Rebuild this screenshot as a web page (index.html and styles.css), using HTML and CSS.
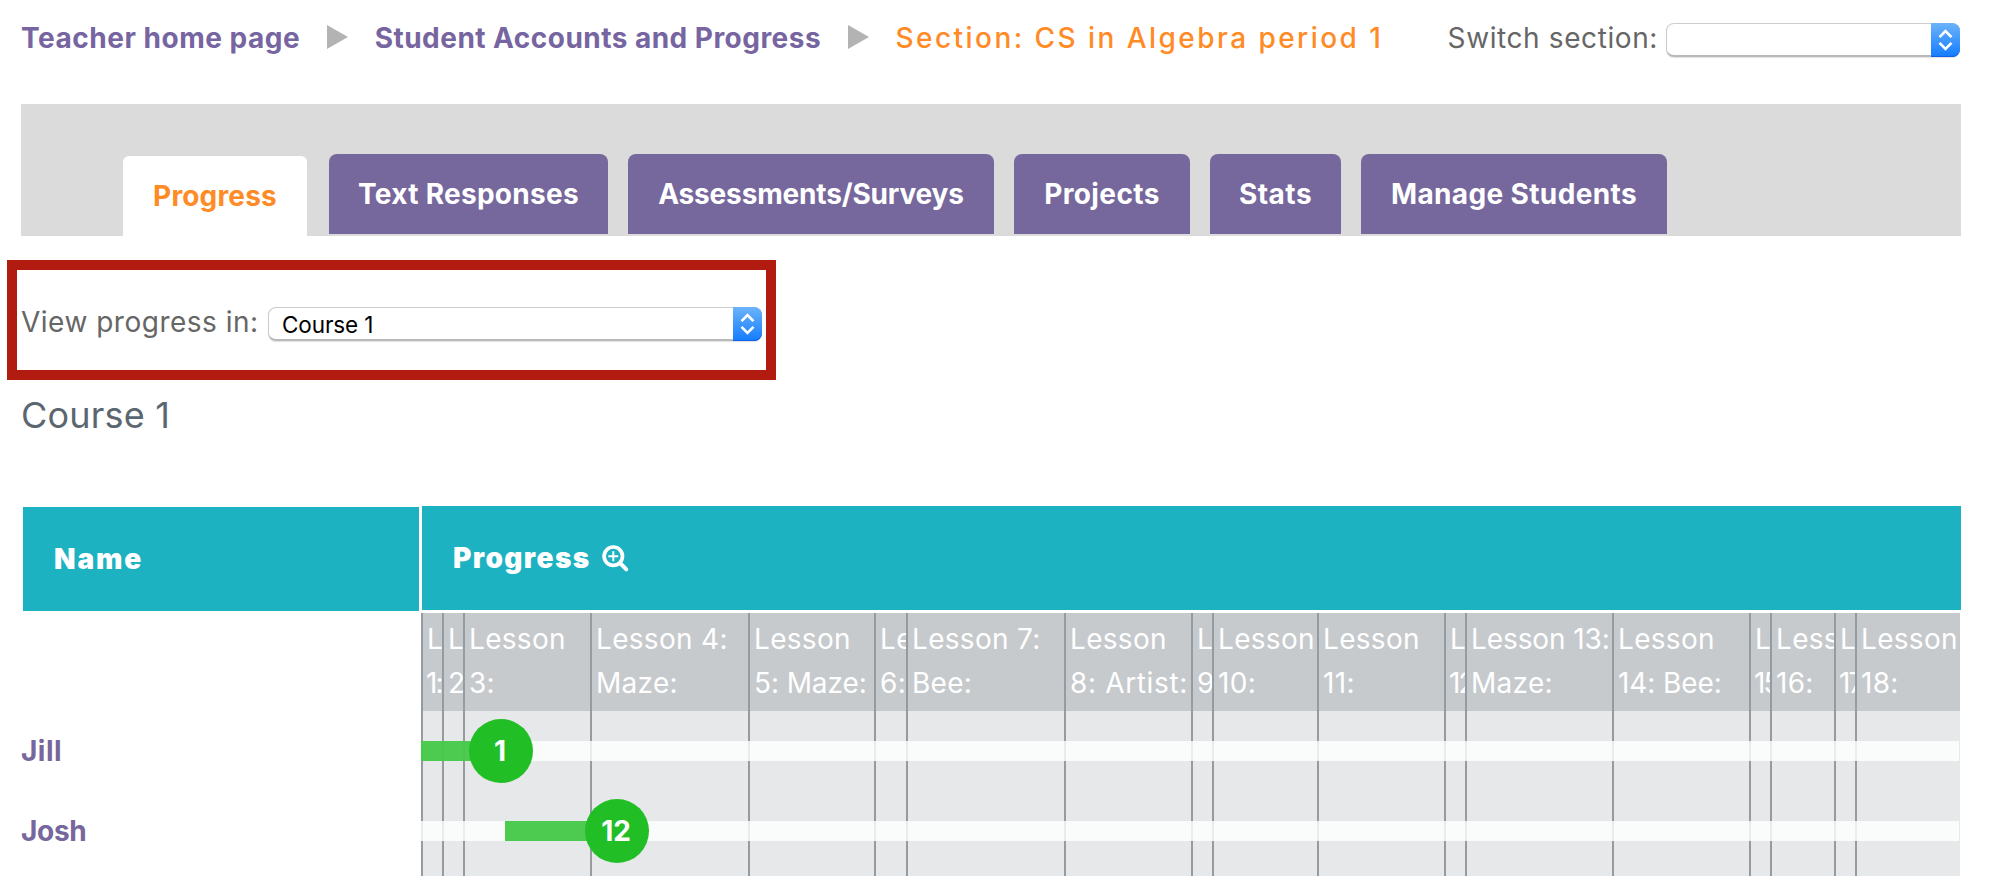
FILE: index.html
```html
<!DOCTYPE html>
<html lang="en">
<head>
<meta charset="utf-8">
<title>Section progress</title>
<link rel="stylesheet" href="styles.css">
</head>
<body>
<header class="topbar">
  <a class="crumb crumb-home">Teacher home page</a>
  <svg class="crumb-arrow" width="21" height="24" viewBox="0 0 21 24"><path d="M0 0L21 12L0 24Z" fill="#b3b3b3"/></svg>
  <a class="crumb crumb-accounts">Student Accounts and Progress</a>
  <svg class="crumb-arrow" width="21" height="24" viewBox="0 0 21 24"><path d="M0 0L21 12L0 24Z" fill="#b3b3b3"/></svg>
  <span class="crumb-current">Section: CS in Algebra period 1</span>
  <div class="switcher">
    <span class="switcher-label">Switch section:</span>
    <div class="select select-section">
      <span class="select-value"></span>
      <span class="select-button"><svg width="29" height="34" viewBox="0 0 29 34" fill="none" stroke="#fff" stroke-width="2.6"><path d="M8.5 14.2L14.5 8L20.5 14.2M8.5 19.8L14.5 26L20.5 19.8"/></svg></span>
    </div>
  </div>
</header>

<nav class="tabs">
  <a class="tab tab-active">Progress</a>
  <a class="tab tab-responses">Text Responses</a>
  <a class="tab tab-assessments">Assessments/Surveys</a>
  <a class="tab tab-projects">Projects</a>
  <a class="tab tab-stats">Stats</a>
  <a class="tab tab-manage">Manage Students</a>
</nav>

<main>
  <section class="course-picker">
    <span class="picker-label">View progress in:</span>
    <div class="select select-course">
      <span class="select-value">Course 1</span>
      <span class="select-button"><svg width="29" height="34" viewBox="0 0 29 34" fill="none" stroke="#fff" stroke-width="2.6"><path d="M8.5 14.2L14.5 8L20.5 14.2M8.5 19.8L14.5 26L20.5 19.8"/></svg></span>
    </div>
  </section>

  <h1 class="course-title">Course 1</h1>

  <div class="report">
    <div class="names">
      <div class="head head-name">Name</div>
      <div class="name-list">
        <a class="student jill">Jill</a>
        <a class="student josh">Josh</a>
      </div>
    </div>
    <div class="progress">
      <div class="head head-progress">
        <span class="head-text">Progress</span>
        <svg class="zoom-icon" width="28" height="28" viewBox="0 0 28 28" fill="none" stroke="#fff"><circle cx="11.3" cy="11.2" r="9.2" stroke-width="3.7"/><path d="M18 18L24.3 24.3" stroke-width="4" stroke-linecap="round"/><path d="M11.3 6.2V16.2M6.3 11.2H16.3" stroke-width="2"/></svg>
      </div>
      <div class="chart">
        <div class="lessons">
          <div class="lesson"><div class="lesson-name">Lesson<br><span class="digits">1:</span></div></div>
          <div class="lesson"><div class="lesson-name">Lesson<br>2:</div></div>
          <div class="lesson"><div class="lesson-name">Lesson<br>3:</div></div>
          <div class="lesson"><div class="lesson-name">Lesson 4:<br>Maze:</div></div>
          <div class="lesson"><div class="lesson-name">Lesson<br><span class="snug">5: Maze:</span></div></div>
          <div class="lesson"><div class="lesson-name">Lesson<br>6:</div></div>
          <div class="lesson"><div class="lesson-name">Lesson 7:<br>Bee:</div></div>
          <div class="lesson"><div class="lesson-name">Lesson<br><span class="loose">8: Artist:</span></div></div>
          <div class="lesson"><div class="lesson-name">Lesson<br>9:</div></div>
          <div class="lesson"><div class="lesson-name">Lesson<br>10:</div></div>
          <div class="lesson"><div class="lesson-name">Lesson<br>11:</div></div>
          <div class="lesson"><div class="lesson-name">Lesson<br><span class="digits">12:</span></div></div>
          <div class="lesson"><div class="lesson-name"><span class="snug">Lesson 13:</span><br>Maze:</div></div>
          <div class="lesson"><div class="lesson-name">Lesson<br><span class="snug">14: Bee:</span></div></div>
          <div class="lesson"><div class="lesson-name">Lesson<br><span class="digits">15:</span></div></div>
          <div class="lesson"><div class="lesson-name">Lesson<br>16:</div></div>
          <div class="lesson"><div class="lesson-name">Lesson<br><span class="digits">17:</span></div></div>
          <div class="lesson"><div class="lesson-name">Lesson<br>18:</div></div>
        </div>
        <div class="rows">
          <div class="row"><div class="track"><div class="done" style="margin-left:0;width:80px"><span class="bubble">1</span></div></div></div>
          <div class="row"><div class="track"><div class="done" style="margin-left:84px;width:112px"><span class="bubble">12</span></div></div></div>
        </div>
      </div>
    </div>
  </div>
</main>
</body>
</html>
```
FILE: styles.css
```css
* { box-sizing: border-box; }

body {
  margin: 0;
  padding: 16px 31px 0 21px;
  height: 876px;
  overflow: hidden;
  background: #fff;
  font-family: Inter, "Liberation Sans", sans-serif;
  font-size: 28px;
  line-height: 44px;
  white-space: nowrap;
  color: #666;
}

svg { display: block; flex: none; }

/* Breadcrumb bar */
.topbar {
  display: flex;
  height: 44px;
}

.crumb { font-weight: 700; color: #7665a0; }
.crumb-home { letter-spacing: 0.52px; }
.crumb-accounts { letter-spacing: 0.47px; }
.crumb-arrow { margin: 9px 26.5px 0 27px; }
.crumb-current { font-weight: 500; letter-spacing: 2.45px; color: #ff8b26; }

.switcher {
  display: flex;
  gap: 8px;
  margin-left: auto;
  margin-right: 1px;
}
.switcher-label { letter-spacing: 0.6px; }

/* Select controls */
.select {
  display: flex;
  height: 34px;
  border: 1px solid #cdcdcd;
  border-bottom: 2px solid #b9b9b9;
  border-radius: 8px;
  background: #fff;
  box-shadow: 0 1px 1px rgba(0, 0, 0, 0.12);
}
.select-value {
  flex: 1;
  padding-left: 13px;
  font-size: 22.5px;
  line-height: 33px;
  letter-spacing: -0.1px;
  color: #000;
}
.select-button {
  flex: none;
  width: 29px;
  height: 34px;
  margin: -1px -1px -2px 0;
  border-radius: 0 8px 8px 0;
  background: linear-gradient(#6cb3fa, #147cfd);
  box-shadow: inset 0 -1px 0 #1260e6;
}
.select-section { width: 294px; margin-top: 7px; }

/* Tab bar */
.tabs {
  display: flex;
  gap: 20px;
  height: 132px;
  margin-top: 44px;
  padding: 50px 0 0 102px;
  background: #dbdbdb;
}
.tab {
  height: 80px;
  border-radius: 8px 8px 0 0;
  background: #76679d;
  color: #fff;
  font-weight: 700;
  line-height: 80px;
  text-align: center;
}
.tab-active {
  width: 184px;
  margin: 2px 2px 0 0;
  border-radius: 6px 6px 0 0;
  background: #fff;
  color: #ff8b26;
  letter-spacing: 0.17px;
}
.tab-responses { width: 279px; letter-spacing: 0.29px; }
.tab-assessments { width: 366px; letter-spacing: -0.17px; }
.tab-projects { width: 176px; letter-spacing: 0.4px; }
.tab-stats { width: 131px; letter-spacing: 0.5px; }
.tab-manage { width: 306px; letter-spacing: 0.36px; }

/* Course picker */
.course-picker {
  display: flex;
  width: 769px;
  height: 120px;
  margin: 24px 0 0 -14px;
  padding: 30px 0 0 4px;
  border: 10px solid #b21b10;
}
.picker-label { width: 247px; letter-spacing: 0.5px; }
.select-course { width: 494px; margin-top: 7px; }

.course-title {
  margin: 13px 0 0;
  font-size: 36px;
  font-weight: 400;
  line-height: 44px;
  letter-spacing: 0.2px;
  color: #5b6770;
}

/* Progress report */
.report {
  display: grid;
  grid-template-columns: 400px 1540px;
  margin-top: 69px;
}

.head {
  height: 104px;
  background: #1db2c1;
  color: #fff;
  font-weight: 900;
  line-height: 104px;
}
.head-name {
  width: 396px;
  margin: 1px 0 0 2px;
  padding-left: 31px;
  letter-spacing: 1.9px;
}
.head-progress {
  display: flex;
  margin-left: 1px;
  padding-left: 31px;
  letter-spacing: 1.4px;
}
.head-text { width: 140px; }
.zoom-icon { margin: 39px 0 0 9px; }

.name-list { margin-top: 100px; }
.student {
  display: block;
  height: 80px;
  color: #76679d;
  font-weight: 700;
  line-height: 80px;
}
.jill { letter-spacing: 0.5px; }
.josh { letter-spacing: -0.3px; }

/* The lesson columns and the student rows share one grid area */
.chart {
  display: grid;
  width: 1539px;
  height: 263px;
  margin-top: 3px;
}
.lessons,
.rows { grid-area: 1 / 1; }

.lessons {
  display: grid;
  grid-template-columns: 21px 21px 127px 158px 126px 32px 158px 127px 21px 105px 127px 21px 147px 137px 21px 64px 21px 105px;
  background: #e6e8e9;
}
.lesson {
  overflow: hidden;
  border-left: 2px solid #949ca2;
}
.lesson-name {
  height: 98px;
  padding: 4px 0 0 4px;
  background: #c6cacd;
  color: #fff;
  letter-spacing: 0.3px;
}
.snug { letter-spacing: -0.1px; }
.loose { letter-spacing: 0.65px; }
.digits { margin-left: -1px; letter-spacing: -2px; }

.rows { padding-top: 98px; }
.row {
  display: flex;
  align-items: center;
  height: 80px;
}
.track {
  width: 1538px;
  height: 20px;
  background: rgba(255, 255, 255, 0.8);
}
.done {
  display: flex;
  align-items: center;
  justify-content: flex-end;
  height: 20px;
  background: rgba(34, 190, 38, 0.8);
}
.bubble {
  flex: none;
  width: 64px;
  height: 64px;
  margin-right: -32px;
  padding-right: 2px;
  border-radius: 50%;
  background: #22be26;
  color: #fff;
  font-weight: 700;
  line-height: 64px;
  text-align: center;
}
```
